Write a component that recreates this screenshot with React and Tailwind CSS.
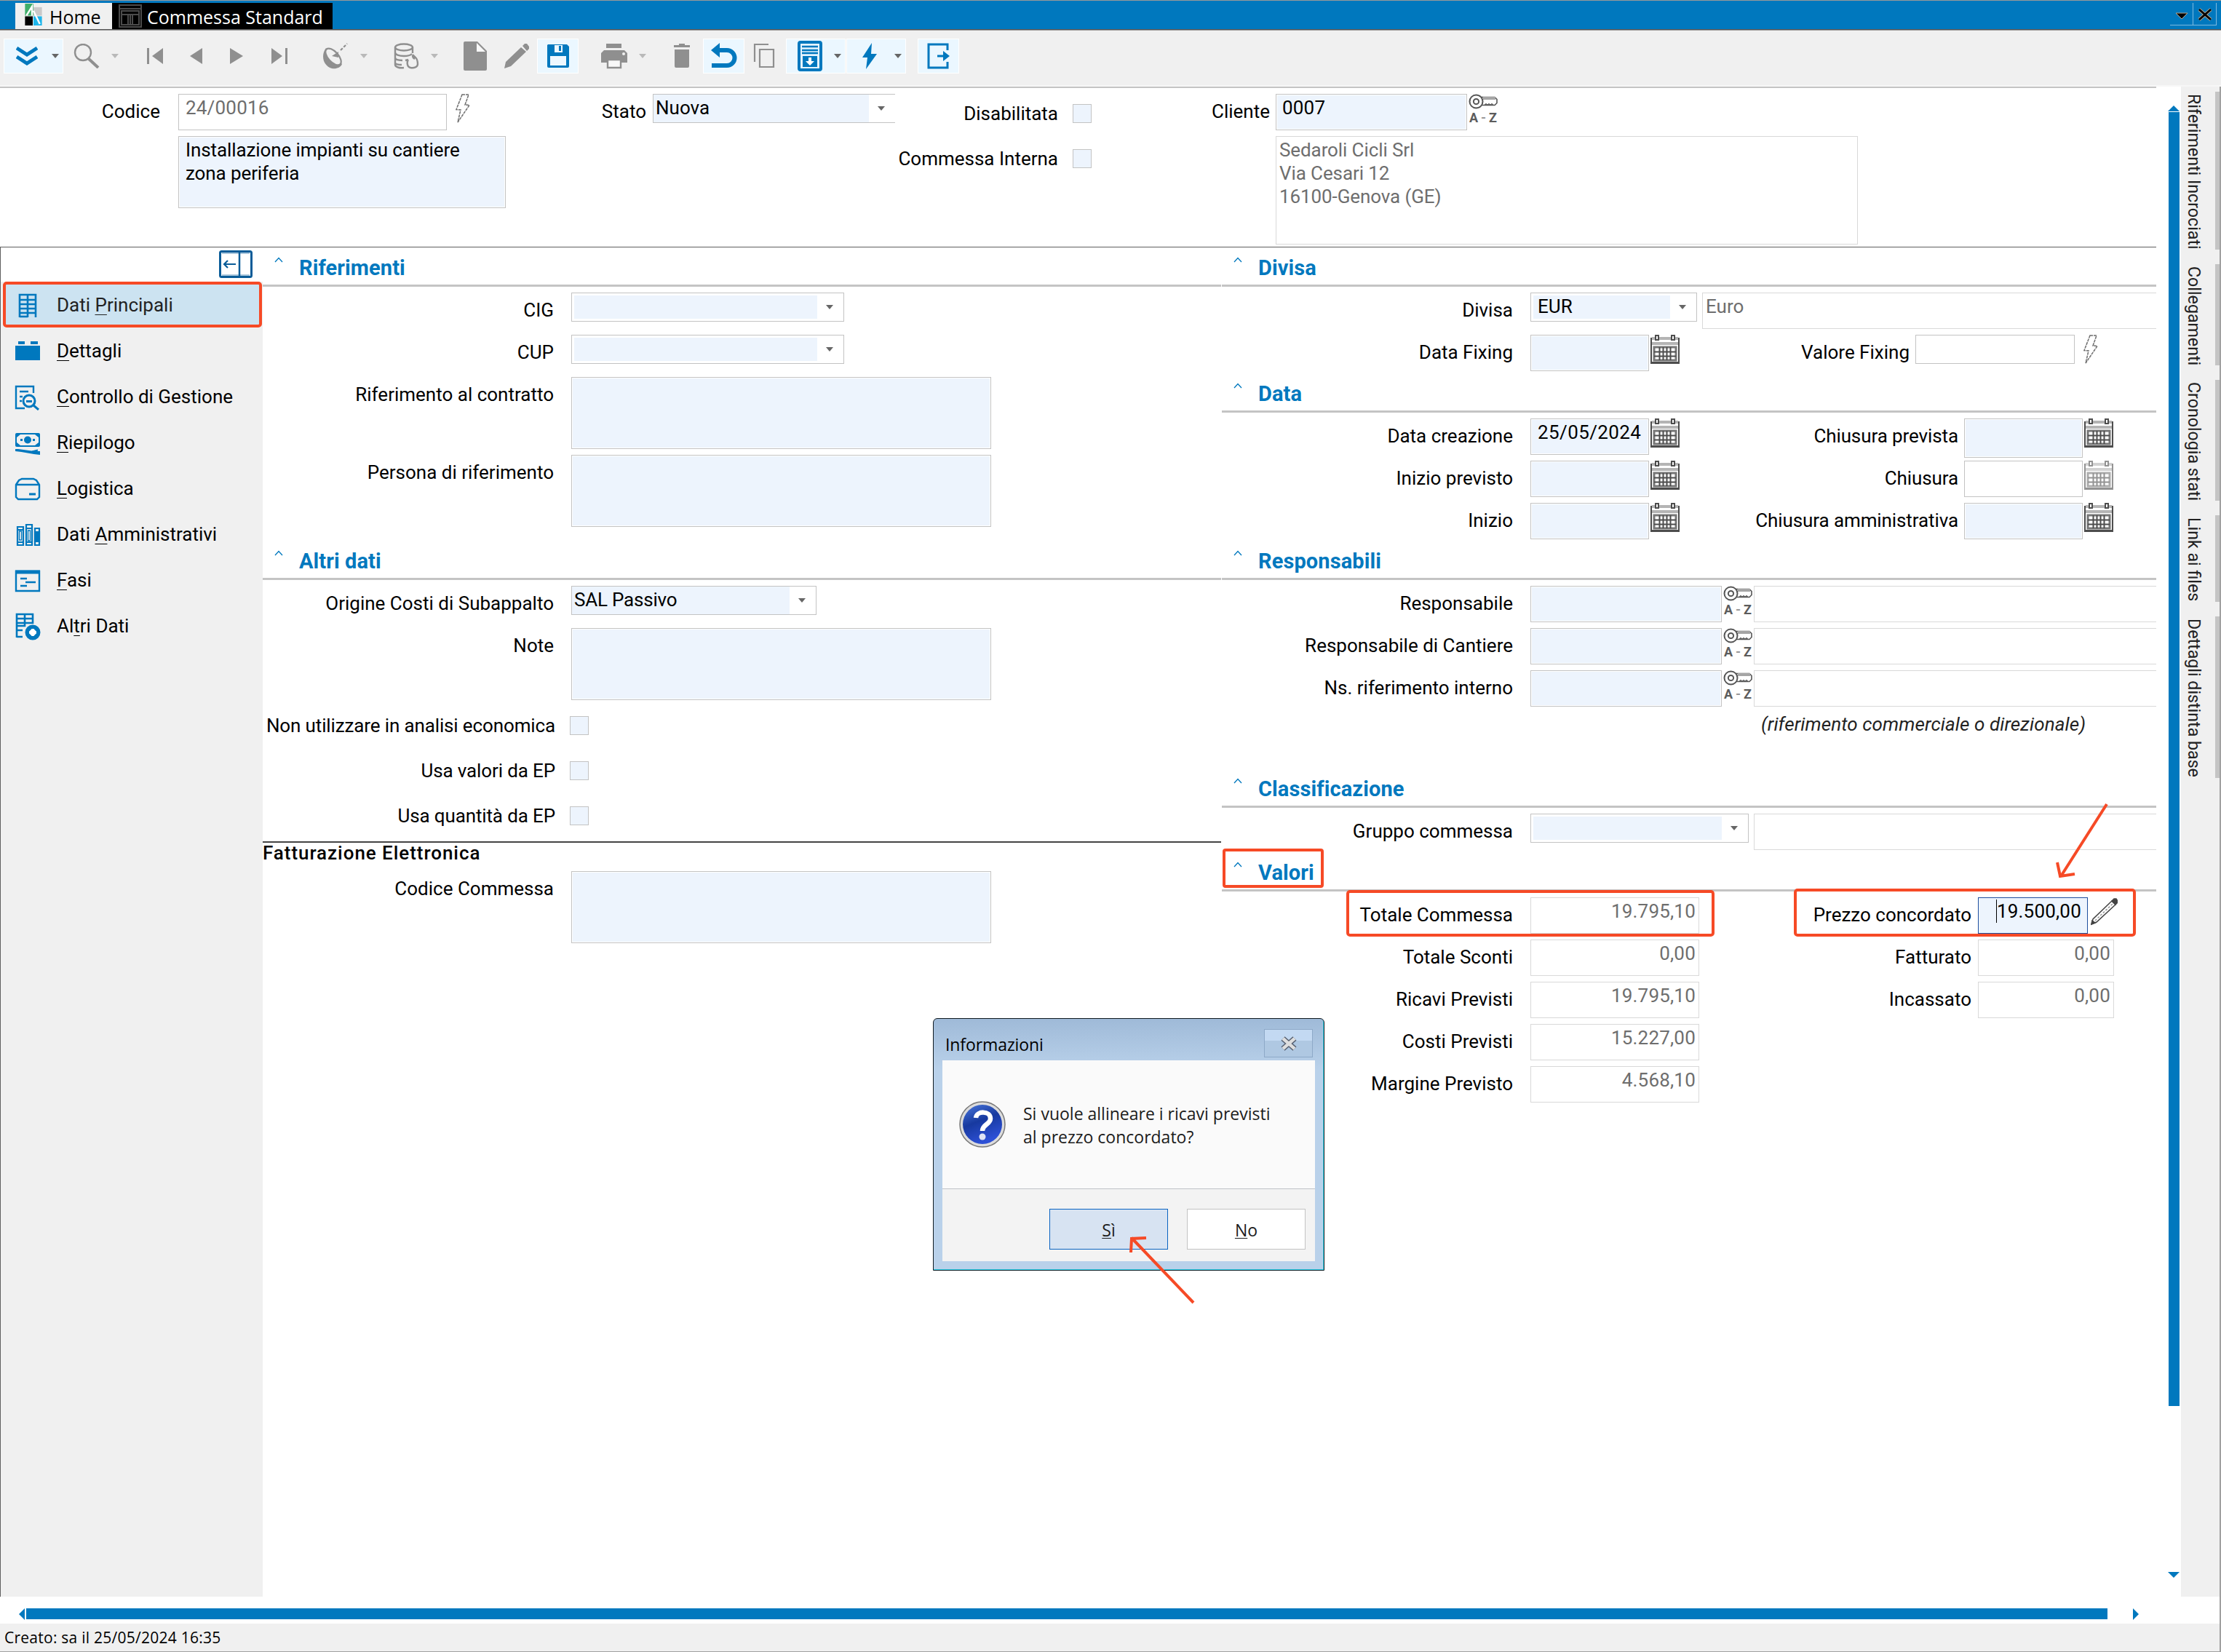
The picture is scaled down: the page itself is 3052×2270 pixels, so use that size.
import React from 'react';
import clsx from 'clsx';

const BLUE = '#0078be';
const GREY = '#8f8f8f';
const RED = '#f64a26';

/* ---------- toolbar icons ---------- */

const Caret = ({ dark = false, className }) => (
  <svg viewBox="0 0 10 6" className={clsx('h-[6px] w-[10px] shrink-0', className)}>
    <path d="M0 0h10L5 6z" fill={dark ? '#666' : '#b9b9b9'} />
  </svg>
);

const DoubleChevronIcon = () => (
  <svg viewBox="0 0 30 28" className="h-[28px] w-[30px]" fill="none" stroke={BLUE} strokeWidth="5">
    <path d="M1 3l14 9 14-9M1 15l14 9 14-9" />
  </svg>
);

const SearchIcon = () => (
  <svg viewBox="0 0 36 34" className="h-[34px] w-[36px]" fill="none" stroke={GREY}>
    <circle cx="13" cy="12" r="11" strokeWidth="2.4" />
    <path d="M20 20l14 13" strokeWidth="4" />
  </svg>
);

const FirstIcon = () => (
  <svg viewBox="0 0 24 24" className="h-[24px] w-[24px]" fill={GREY}>
    <path d="M1 1h3v22H1zM23 1v22L8 12z" />
  </svg>
);

const PrevIcon = () => (
  <svg viewBox="0 0 20 24" className="h-[24px] w-[20px]" fill={GREY}>
    <path d="M18 1v22L1 12z" />
  </svg>
);

const NextIcon = () => (
  <svg viewBox="0 0 20 24" className="h-[24px] w-[20px]" fill={GREY}>
    <path d="M1 1v22l18-11z" />
  </svg>
);

const LastIcon = () => (
  <svg viewBox="0 0 24 24" className="h-[24px] w-[24px]" fill={GREY}>
    <path d="M20 1h3v22h-3zM1 1v22l15-11z" />
  </svg>
);

const SatelliteIcon = () => (
  <svg viewBox="0 0 36 36" className="h-[36px] w-[36px]">
    <path d="M5 7C-2 16 0 31 13 35c6 1 12-1 14-6z" fill={GREY} />
    <ellipse cx="15" cy="19" rx="14" ry="7" transform="rotate(48 15 19)" fill="#f0f0f0" stroke={GREY} strokeWidth="2.2" />
    <path d="M13 18l9-6v8z" fill={GREY} />
    <path d="M25 10l9-9" stroke={GREY} strokeWidth="2.2" strokeDasharray="4 2" />
  </svg>
);

const DatabaseIcon = () => (
  <svg viewBox="0 0 36 36" className="h-[36px] w-[36px]" fill="none" stroke={GREY} strokeWidth="2.4">
    <ellipse cx="15" cy="6" rx="12" ry="4.5" />
    <path d="M3 6v24c0 3 6 5 12 4M27 6v8M3 13c0 3 5 5 12 5M3 20c0 3 5 4 10 4M3 27c0 2 4 3 9 3M15 18c5 0 9-1 11-3" />
    <path d="M21 23c-2 3-2 10 3 11s10-1 10-5-1-7-3-9-4-4-4-4M21 23l-4 1M27 17c0 3 1 4 3 5" />
  </svg>
);

const FileIcon = () => (
  <svg viewBox="0 0 34 42" className="h-[42px] w-[34px]">
    <path d="M3 1h17l13 13v25a2 2 0 01-2 2H3a2 2 0 01-2-2V3a2 2 0 012-2z" fill={GREY} />
    <path d="M19 3v12h12z" fill="#f8f8f8" />
  </svg>
);

const PencilIcon = () => (
  <svg viewBox="0 0 36 36" className="h-[36px] w-[36px]" fill={GREY}>
    <path d="M1 35l2-9L24 6l7 6L10 32zM26 4l3-3h3l3 4v3l-3 3z" />
  </svg>
);

const SaveIcon = () => (
  <svg viewBox="0 0 32 34" className="h-[34px] w-[32px]">
    <path d="M2 1h26l3 3v27a2 2 0 01-2 2H3a2 2 0 01-2-2V2z" fill={BLUE} />
    <path d="M11 2h11v10H11z" fill="#eef8ff" />
    <path d="M17 3h3v7h-3z" fill={BLUE} />
    <path d="M5 17h22v13H5z" fill="#eef8ff" />
  </svg>
);

const PrinterIcon = () => (
  <svg viewBox="0 0 36 36" className="h-[36px] w-[36px]">
    <path d="M7 1h21v6H7zM4 10h28l4 4v13H0V14z" fill={GREY} />
    <circle cx="31" cy="15" r="2" fill="#f0f0f0" />
    <path d="M9 23h18v11H9z" fill="#f8f8f8" stroke={GREY} strokeWidth="2.4" />
  </svg>
);

const TrashIcon = () => (
  <svg viewBox="0 0 24 36" className="h-[36px] w-[24px]" fill={GREY}>
    <path d="M8 1h8v2h7v3H1V3h7zM2 9h20v23a2 2 0 01-2 2H4a2 2 0 01-2-2z" />
  </svg>
);

const UndoIcon = () => (
  <svg viewBox="0 0 36 36" className="h-[36px] w-[36px]">
    <path d="M8 10h14a10.500 10.500 0 010 21H1" fill="none" stroke={BLUE} strokeWidth="6" />
    <path d="M0 10L12 0v20z" fill={BLUE} />
  </svg>
);

const CopyIcon = () => (
  <svg viewBox="0 0 30 36" className="h-[36px] w-[30px]" fill="none" stroke={GREY} strokeWidth="2.2">
    <path d="M21 2H2v24" />
    <path d="M9 9h19v24H9z" />
  </svg>
);

const CabinetIcon = () => (
  <svg viewBox="0 0 34 42" className="h-[42px] w-[34px]">
    <rect x="2" y="2" width="30" height="38" rx="2" fill="#e4f3fd" stroke={BLUE} strokeWidth="4" />
    <path d="M6 8h22M6 13h22M6 17h22" stroke={BLUE} strokeWidth="2.6" />
    <path d="M7 21h20v15H7z" fill={BLUE} />
    <path d="M15 23h4v5h4l-6 6-6-6h4z" fill="#fff" />
  </svg>
);

const BoltIcon = () => (
  <svg viewBox="0 0 20 36" className="h-[36px] w-[20px]">
    <path d="M13 0L0 20h7L5 36l15-21h-8z" fill={BLUE} />
  </svg>
);

const ExitIcon = () => (
  <svg viewBox="0 0 32 36" className="h-[36px] w-[32px]" fill="none" stroke={BLUE} strokeWidth="3">
    <path d="M28 10V2H2v32h26v-8" />
    <path d="M14 18h12" />
    <path d="M22 11l9 7-9 7z" fill={BLUE} stroke="none" />
  </svg>
);

/* ---------- field icons ---------- */

const OutlineBolt = ({ className }) => (
  <svg viewBox="0 0 20 40" className={clsx('h-[40px] w-[20px] shrink-0', className)} fill="none" stroke="#6d6d6d" strokeWidth="1.500">
    <path d="M9 1h9l-5 14 6 .5L3 39l4-17-6-.5z" strokeDasharray="4 1" />
  </svg>
);

const KeyIcon = () => (
  <div className="ml-[2px] h-[41px] w-[40px] shrink-0">
    <svg viewBox="0 0 40 22" className="h-[22px] w-[40px]">
      <path d="M18 4.500h18l3 3v5l-3 3H18z" fill="#fff" stroke="#555" strokeWidth="1.600" />
      <path d="M20 4h17v4H20z" fill="#a5a5a5" />
      <path d="M22 15.500l2-2 2 2 2-2 2 2 2-2 2 2" fill="none" stroke="#555" strokeWidth="1.200" />
      <circle cx="10.500" cy="10.500" r="9" fill="#fff" stroke="#555" strokeWidth="2" />
      <circle cx="10.500" cy="10.500" r="3.600" fill="none" stroke="#555" strokeWidth="2" />
    </svg>
    <div className="flex h-[19px] justify-between whitespace-nowrap px-px text-[18px] font-bold leading-[22px] text-[#5c5c5c]">
      <span>A</span>
      <span className="text-[#999]">-</span>
      <span>Z</span>
    </div>
  </div>
);

const CalendarIcon = ({ faded = false }) => (
  <svg viewBox="0 0 40 40" className={clsx('ml-[2px] h-[40px] w-[40px] shrink-0', faded && 'opacity-60')}>
    <path d="M1 4v35h38V4" fill="none" stroke="#4d4d4d" strokeWidth="2" />
    <path d="M2 3h36v4H2zM2 10h36v4H2z" fill="#b4b4b4" />
    <path d="M7 1h4v6H7zM29 1h4v6h-4z" fill="#fff" stroke="#4d4d4d" strokeWidth="2" />
    <rect x="5" y="17" width="30" height="18" fill="#fff" stroke="#777" strokeWidth="3" />
    <path d="M12.500 17v18M17.500 17v18M22.500 17v18M27.500 17v18M5 23.500h30M5 29.500h30" stroke="#4d4d4d" strokeWidth="2" />
    <path d="M1 38.500h38" stroke="#4d4d4d" strokeWidth="3" />
  </svg>
);

const OutlinePencil = () => (
  <svg viewBox="0 0 38 40" className="ml-[3px] h-[40px] w-[38px] shrink-0" fill="none" stroke="#444" strokeWidth="1.500">
    <path d="M2 37l2-7L30 5l5 5L9 34z" />
    <path d="M7 32L32 8" strokeDasharray="3 2" stroke="#999" />
    <path d="M30 5l3-3h3l2 3v2l-3 3zM2 37l1-5 4 3z" fill="#444" />
  </svg>
);

/* ---------- sidebar icons ---------- */

const sideIcons = {
  building: (
    <svg viewBox="0 0 36 36" className="h-[36px] w-[36px]" fill="none" stroke={BLUE} strokeWidth="2.600">
      <path d="M7 34V3h22v31M18 3v31M7 10h22M7 16h22M7 22h22M7 28h22" />
      <path d="M7 33h11" />
    </svg>
  ),
  brick: (
    <svg viewBox="0 0 36 36" className="h-[36px] w-[36px]" fill={BLUE}>
      <path d="M1 10h34v20H1zM5 4h9v4H5zM22 4h10v4H22z" />
    </svg>
  ),
  report: (
    <svg viewBox="0 0 36 36" className="h-[36px] w-[36px]" fill="none" stroke={BLUE} strokeWidth="2.400">
      <path d="M26 12V3H2v30h12M7 10h12M7 17h4M7 23h3" />
      <circle cx="20" cy="23" r="8" strokeWidth="3" />
      <path d="M26 29l7 6" strokeWidth="3" />
      <path d="M16 22h8v3h-8z" fill={BLUE} stroke="none" />
    </svg>
  ),
  money: (
    <svg viewBox="0 0 36 36" className="h-[36px] w-[36px]">
      <rect x="1" y="4" width="34" height="19" rx="2" fill={BLUE} />
      <path d="M8 6h20l5 4v7l-5 4H8l-5-4v-7z" fill="#f0f0f0" />
      <circle cx="18" cy="13.500" r="5" fill={BLUE} />
      <path d="M8 12h3v3H8zM25 12h3v3h-3zM1 26h4l22 3h8v5C24 33 12 30 1 29z" fill={BLUE} />
      <path d="M24 29.500l8-2" stroke={BLUE} strokeWidth="2" />
    </svg>
  ),
  box: (
    <svg viewBox="0 0 36 36" className="h-[36px] w-[36px]" fill="none" stroke={BLUE} strokeWidth="2.400">
      <path d="M2 12l4-6 4-2h16l4 2 4 6v17l-3 3H5l-3-3zM2 12h32" />
      <path d="M20 25h9" strokeWidth="3" />
    </svg>
  ),
  binders: (
    <svg viewBox="0 0 36 36" className="h-[36px] w-[36px]" fill="none" stroke={BLUE} strokeWidth="2.200">
      <path d="M4 7h8v25H4zM16 4h8v28h-8zM28 9h6v23h-6zM4 11h8M4 28h8M16 9h8M16 28h8" />
      <path d="M6.500 13h3v12h-3zM18.500 12h3v14h-3z" strokeWidth="1.300" />
      <path d="M28 14h6v13h-6z" fill={BLUE} />
    </svg>
  ),
  gantt: (
    <svg viewBox="0 0 36 36" className="h-[36px] w-[36px]" fill="none" stroke={BLUE} strokeWidth="2.400">
      <path d="M2 5h32v27H2zM8 15h9M15 20h14M8 25h9" />
      <path d="M1 6h34" strokeWidth="5" />
    </svg>
  ),
  addTable: (
    <svg viewBox="0 0 36 38" className="h-[38px] w-[36px]" fill="none" stroke={BLUE} strokeWidth="2.600">
      <path d="M3 34V2h22v12H3M3 8h22M14 2v16H3M3 24h8M3 33h8" />
      <circle cx="25" cy="27" r="7.500" strokeWidth="6" fill="#fff" />
      <path d="M25 22v10M20 27h10" stroke="#fff" strokeWidth="3.500" />
    </svg>
  ),
};

const menu = [
  { icon: 'building', text: ['Dati ', 'P', 'rincipali'], active: true },
  { icon: 'brick', text: ['', 'D', 'ettagli'] },
  { icon: 'report', text: ['', 'C', 'ontrollo di Gestione'] },
  { icon: 'money', text: ['', 'R', 'iepilogo'] },
  { icon: 'box', text: ['', 'L', 'ogistica'] },
  { icon: 'binders', text: ['Dati ', 'A', 'mministrativi'] },
  { icon: 'gantt', text: ['', 'F', 'asi'] },
  { icon: 'addTable', text: ['Al', 't', 'ri Dati'] },
];

/* ---------- form primitives ---------- */

const Label = ({ children, className }) => (
  <div className={clsx('shrink-0 whitespace-nowrap pt-[8px] text-right leading-[32px]', className)}>{children}</div>
);

// Editable fields have a pale blue fill set off from the frame by a thin white gap
const Field = ({ children, className, tone = 'edit' }) => (
  <div
    className={clsx(
      'shrink-0 whitespace-pre border pt-[2px] leading-[32px]',
      tone === 'edit' && 'border-[#c3c3c3] bg-[#edf4fd] ring-1 ring-inset ring-white',
      tone === 'plain' && 'border-[#c3c3c3] text-[#6e6e6e]',
      tone === 'readonly' && 'border-[#d9d9d9] text-[#6e6e6e]',
      className
    )}
  >
    {children}
  </div>
);

const Select = ({ value, className, flush = false, open = false }) => (
  <div className={clsx('flex h-[40px] shrink-0 border border-[#c3c3c3] bg-white', open && 'border-r-0', !flush && 'p-[3px] pr-0', className)}>
    <div className={clsx('flex-1 bg-[#edf4fd] leading-[32px]', flush ? 'pl-[3px] pt-[2px]' : 'pl-[6px]')}>
      <span className={clsx('block', !flush && '-mt-px')}>{value}</span>
    </div>
    <div className="flex w-[36px] items-center justify-center pr-[3px]">
      <Caret dark />
    </div>
  </div>
);

const Checkbox = ({ className }) => (
  <div className={clsx('h-[26px] w-[26px] shrink-0 border border-[#c3c3c3] bg-[#edf4fd]', className)} />
);

const Section = ({ title, className }) => (
  <div className={clsx('flex h-[54px] border-b-[3px] border-[#c4c4c4] pl-[16px]', className)}>
    <svg viewBox="0 0 12 8" className="mt-[13px] h-[8px] w-[12px]" fill="none" stroke={BLUE} strokeWidth="1.300">
      <path d="M1 7l5-5.500L11 7" />
    </svg>
    <h2 className="ml-[22px] mt-[11px] text-[29px] font-bold leading-[34px] tracking-[0.1px] text-[#0078be]">{title}</h2>
  </div>
);

const Row = ({ children, className, height = 'h-[58px]' }) => (
  <div className={clsx('flex items-start', height, className)}>{children}</div>
);

/* ---------- page areas ---------- */

const ToolButton = ({ children, active = false, className }) => (
  <div className={clsx('flex h-[48px] shrink-0 items-center', active && 'border border-white bg-[#ebf7ff]', className)}>{children}</div>
);

const TitleBar = () => (
  <div className="flex h-[42px] flex-col border-t border-[#999]">
    <div className="flex h-[39px] bg-[#0078be] pl-[21px] pt-[3px] font-['Open_Sans','Noto_Sans',sans-serif] text-[25px]">
      <div className="flex w-[133px] items-center bg-[#f0f0f0] pl-[13px]">
        <svg viewBox="0 0 24 32" className="mb-[4px] h-[31px] w-[24px]">
          <path d="M0 0h12v17H0z" fill="#3fae6a" />
          <path d="M12 5h12v12H12z" fill="#c9c9c9" />
          <path d="M0 18h11v13H0z" fill="#000" />
          <path d="M12 18h12v13H12z" fill="#1fb5ea" />
          <path d="M2 17L10 4v13M12 10l9 19" fill="none" stroke="#fff" strokeWidth="2.500" />
        </svg>
        <span className="ml-[10px] pt-[3px]">Home</span>
      </div>
      <div className="flex w-[303px] items-center bg-black pl-[9px] text-white">
        <svg viewBox="0 0 32 32" className="h-[32px] w-[32px]" fill="none" stroke="#4b4b4b" strokeWidth="2">
          <path d="M1 1h30v30H1zM1 6h30M4 9h24v19H4zM4 14h24M13 15v13M19 15v13M16 15v13" />
        </svg>
        <span className="ml-[7px] whitespace-nowrap pt-[3px]">Commessa Standard</span>
      </div>
      <div className="ml-auto mr-[6px] flex h-[31px]">
        <div className="flex w-[32px] items-center justify-center border-b border-r border-[#7fb9de]">
          <svg viewBox="0 0 18 10" className="mt-[5px] h-[10px] w-[18px]">
            <path d="M1 1h16L9 9z" fill="#000" stroke="#b9a58c" strokeWidth="1" />
          </svg>
        </div>
        <div className="flex w-[32px] items-center justify-center border-b border-r border-[#7fb9de]">
          <svg viewBox="0 0 20 18" className="mt-[2px] h-[18px] w-[20px]">
            <path d="M2 2l16 14M18 2L2 16" stroke="#b9a58c" strokeWidth="4.500" />
            <path d="M2 2l16 14M18 2L2 16" stroke="#000" strokeWidth="2.800" />
          </svg>
        </div>
      </div>
    </div>
    <div className="h-[2px] border-b border-t border-b-[#999] border-t-[#555]" />
  </div>
);

const Toolbar = () => (
  <div className="flex h-[77px] items-start border-b-2 border-b-[#f7f7f7] bg-[#f0f0f0] pl-[5px] pt-[11px]">
    <ToolButton active className="w-[82px] pl-[16px]">
      <DoubleChevronIcon />
      <Caret dark className="ml-[19px]" />
    </ToolButton>
    <ToolButton className="ml-[14px]"><SearchIcon /><Caret className="ml-[16px]" /></ToolButton>
    <ToolButton className="ml-[38px]"><FirstIcon /></ToolButton>
    <ToolButton className="ml-[35px]"><PrevIcon /></ToolButton>
    <ToolButton className="ml-[35px]"><NextIcon /></ToolButton>
    <ToolButton className="ml-[37px]"><LastIcon /></ToolButton>
    <ToolButton className="ml-[47px]"><SatelliteIcon /><Caret className="ml-[16px]" /></ToolButton>
    <ToolButton className="ml-[35px]"><DatabaseIcon /><Caret className="ml-[16px]" /></ToolButton>
    <ToolButton className="ml-[34px]"><FileIcon /></ToolButton>
    <ToolButton className="ml-[22px]"><PencilIcon /></ToolButton>
    <ToolButton active className="ml-[10px] w-[57px] justify-center"><SaveIcon /></ToolButton>
    <ToolButton className="ml-[31px]"><PrinterIcon /><Caret className="ml-[16px]" /></ToolButton>
    <ToolButton className="ml-[37px]"><TrashIcon /></ToolButton>
    <ToolButton active className="ml-[17px] w-[57px] justify-center"><UndoIcon /></ToolButton>
    <ToolButton className="ml-[12px]"><CopyIcon /></ToolButton>
    <ToolButton active className="ml-[15px] w-[82px] pl-[15px]"><CabinetIcon /><Caret dark className="ml-[16px]" /></ToolButton>
    <ToolButton active className="ml-px w-[82px] pl-[21px]"><BoltIcon /><Caret dark className="ml-[24px]" /></ToolButton>
    <ToolButton active className="ml-[16px] w-[57px] justify-center"><ExitIcon /></ToolButton>
  </div>
);

const Header = () => (
  <div className="flex h-[221px] items-start border-b border-t-2 border-b-[#5f5f5f] border-t-[#c4c4c4] pt-[8px]">
    <Label className="w-[220px]">Codice</Label>
    <div className="ml-[25px] w-[455px]">
      <div className="flex">
        <Field tone="plain" className="h-[50px] w-[369px] px-[9px] tracking-[0.2px]">24/00016</Field>
        <OutlineBolt className="ml-[12px]" />
      </div>
      <Field className="mt-[8px] h-[99px] w-[450px] px-[9px] tracking-[-0.1px]">{'Installazione impianti su cantiere\nzona periferia'}</Field>
    </div>
    <Label className="w-[188px]">Stato</Label>
    <Select flush open value="Nuova" className="ml-[9px] w-[333px]" />
    <div className="w-[224px] pt-[3px]">
      <Label>Disabilitata</Label>
      <Label className="mt-[22px]">Commessa Interna</Label>
    </div>
    <div className="ml-[20px] pt-[14px]">
      <Checkbox />
      <Checkbox className="mt-[36px]" />
    </div>
    <Label className="w-[245px]">Cliente</Label>
    <div className="ml-[8px]">
      <div className="flex">
        <Field className="h-[50px] w-[263px] px-[8px] tracking-[0.2px]">0007</Field>
        <KeyIcon />
      </div>
      <Field tone="readonly" className="mt-[8px] h-[149px] w-[800px] px-[4px] tracking-[-0.1px]">{'Sedaroli Cicli Srl\nVia Cesari 12\n16100-Genova (GE)'}</Field>
    </div>
  </div>
);

const Sidebar = () => (
  <nav className="flex w-[361px] shrink-0 flex-col border-l border-l-[#5f5f5f]">
    <div className="flex h-[47px] justify-end pr-[14px] pt-[4px]">
      <svg viewBox="0 0 46 38" className="h-[38px] w-[46px]" fill="none" stroke="#0a5c98">
        <rect x="1.500" y="1.500" width="43" height="35" rx="2" strokeWidth="3" />
        <path d="M4 4h38M4 34h38" stroke="#a9c6dc" strokeWidth="2" />
        <path d="M28 3v32" strokeWidth="2.500" />
        <path d="M7 19h16M12 14l-5 5 5 5" strokeWidth="2.200" />
      </svg>
    </div>
    <div className="flex-1 bg-[#f0f0f0]">
      {menu.map(({ icon, text: [before, key, after], active }) => (
        <div
          key={icon}
          className={clsx(
            'flex h-[63px] items-center pt-[2px]',
            active ? 'ml-[3px] w-[356px] rounded-[5px] border-4 border-[#f64a26] bg-[#cce3f1] pl-[12px] text-[#222]' : 'pl-[19px]'
          )}
        >
          <span className="flex w-[36px] shrink-0 justify-center">{sideIcons[icon]}</span>
          <span className="ml-[22px] whitespace-pre">
            {before}
            <span className="underline decoration-1 underline-offset-[4px]">{key}</span>
            {after}
          </span>
        </div>
      ))}
    </div>
  </nav>
);

const LeftColumn = () => (
  <div className="w-[1317px] shrink-0">
    <Section title="Riferimenti" />
    <Row className="mt-[8px]"><Label className="w-[400px]">CIG</Label><Select className="ml-[24px] w-[375px]" /></Row>
    <Row><Label className="w-[400px]">CUP</Label><Select className="ml-[24px] w-[375px]" /></Row>
    <Row height="h-[107px]"><Label className="w-[400px]">Riferimento al contratto</Label><Field className="ml-[24px] h-[99px] w-[577px]" /></Row>
    <Row height="h-[118px]"><Label className="w-[400px]">Persona di riferimento</Label><Field className="ml-[24px] h-[99px] w-[577px]" /></Row>
    <Section title="Altri dati" />
    <Row className="mt-[8px]">
      <Label className="w-[400px]">Origine Costi di Subappalto</Label>
      <Select flush value="SAL Passivo" className="ml-[24px] w-[337px] tracking-[-0.2px]" />
    </Row>
    <Row height="h-[121px]"><Label className="w-[400px]">Note</Label><Field className="ml-[24px] h-[99px] w-[577px]" /></Row>
    {['Non utilizzare in analisi economica', 'Usa valori da EP', 'Usa quantità da EP'].map((text) => (
      <div key={text} className="flex h-[62px] items-start">
        <div className="-mt-[4px] w-[402px] whitespace-nowrap text-right leading-[34px] tracking-[-0.13px]">{text}</div>
        <Checkbox className="ml-[20px]" />
      </div>
    ))}
    <div className="-mt-[14px] h-[41px] border-t-2 border-[#444] font-medium leading-[29px] tracking-[0.95px]">Fatturazione Elettronica</div>
    <Row><Label className="w-[400px]">Codice Commessa</Label><Field className="ml-[24px] h-[99px] w-[577px]" /></Row>
  </div>
);

const totals = [
  ['Totale Commessa', '19.795,10'],
  ['Totale Sconti', '0,00', 'Fatturato', '0,00'],
  ['Ricavi Previsti', '19.795,10', 'Incassato', '0,00'],
  ['Costi Previsti', '15.227,00'],
  ['Margine Previsto', '4.568,10'],
];

const RightColumn = () => (
  <div className="ml-px w-[1284px] shrink-0">
    <Section title="Divisa" />
    <Row className="mt-[8px]">
      <Label className="w-[400px]">Divisa</Label>
      <Select value="EUR" className="ml-[24px] w-[229px]" />
      <Field tone="readonly" className="ml-[7px] h-[50px] w-[624px] border-r-0 px-[4px]">Euro</Field>
    </Row>
    <Row height="h-[55px]">
      <Label className="w-[400px]">Data Fixing</Label>
      <Field className="ml-[24px] h-[50px] w-[163px]" />
      <CalendarIcon />
      <Label className="w-[316px]">Valore Fixing</Label>
      <Field tone="plain" className="ml-[8px] h-[40px] w-[219px]" />
      <OutlineBolt className="ml-[12px]" />
    </Row>
    <Section title="Data" className="-mt-[2px]" />
    {[
      ['Data creazione', '25/05/2024', 'Chiusura prevista', false, 'h-[54px]'],
      ['Inizio previsto', '', 'Chiusura', true, 'h-[50px]'],
      ['Inizio', '', 'Chiusura amministrativa', false, 'h-[50px]'],
    ].map(([left, date, right, locked, rightHeight], i) => (
      <Row key={left} className={i === 0 ? 'mt-[8px]' : ''}>
        <Label className="w-[400px]">{left}</Label>
        <Field className="ml-[24px] h-[50px] w-[163px] px-[9px] tracking-[0.4px]">{date}</Field>
        <CalendarIcon />
        <Label className="w-[383px] tracking-[-0.1px]">{right}</Label>
        <Field tone={locked ? 'plain' : 'edit'} className={clsx('ml-[8px] w-[163px]', rightHeight)} />
        <CalendarIcon faded={locked} />
      </Row>
    ))}
    <Section title="Responsabili" className="-mt-[6px]" />
    {['Responsabile', 'Responsabile di Cantiere', 'Ns. riferimento interno'].map((text, i) => (
      <Row key={text} className={i === 0 ? 'mt-[8px]' : ''}>
        <Label className="w-[400px]">{text}</Label>
        <Field className="ml-[24px] h-[50px] w-[263px]" />
        <KeyIcon />
        <Field tone="readonly" className="ml-[2px] h-[50px] w-[553px] border-r-0" />
      </Row>
    ))}
    <p className="h-[77px] pl-[741px] italic leading-[32px] tracking-[0.1px] text-[#222]">(riferimento commerciale o direzionale)</p>
    <Section title="Classificazione" />
    <Row className="mt-[8px]">
      <Label className="w-[400px]">Gruppo commessa</Label>
      <Select className="ml-[24px] w-[300px]" />
      <Field tone="readonly" className="ml-[7px] h-[50px] w-[553px] border-r-0" />
    </Row>
    <div className="relative -mt-[5px]">
      <Section title="Valori" />
      <div className="absolute -top-[5px] left-[1px] h-[54px] w-[139px] rounded-[4px] border-4 border-[#f64a26]" />
    </div>
    <div className="relative pt-[8px]">
      {totals.map(([left, amount, right, rightAmount]) => (
        <Row key={left}>
          <Label className="w-[400px]">{left}</Label>
          <Field tone="readonly" className="ml-[24px] h-[50px] w-[232px] px-[4px] text-right tracking-[0.2px]">{amount}</Field>
          {right && <Label className="w-[374px]">{right}</Label>}
          {right && <Field tone="readonly" className="ml-[9px] h-[50px] w-[187px] px-[4px] text-right tracking-[0.2px]">{rightAmount}</Field>}
          {left === 'Totale Commessa' && (
            <>
              <Label className="w-[374px]">Prezzo concordato</Label>
              <div className="ml-[9px] flex h-[50px] w-[151px] items-start justify-end border border-[#1f4f9e] bg-[#edf4fd] pr-[8px] pt-[2px]">
                <span className="h-[32px] w-px bg-black" />
                <span className="leading-[32px] tracking-[0.2px]">19.500,00</span>
              </div>
              <OutlinePencil />
            </>
          )}
        </Row>
      ))}
      {/* highlight frames */}
      <div className="absolute -top-[2px] left-[171px] h-[64px] w-[506px] rounded-[5px] border-4 border-[#f64a26]" />
      <div className="absolute -top-[4px] left-[786px] h-[66px] w-[470px] rounded-[5px] border-4 border-[#f64a26]" />
    </div>
  </div>
);

const sideTabs = [
  ['Riferimenti Incrociati', 'h-[217px]'],
  ['Collegamenti', 'h-[139px]'],
  ['Cronologia stati', 'h-[166px]'],
  ['Link ai files', 'h-[119px]'],
  ['Dettagli distinta base', 'h-[222px]'],
];

const RightRail = () => (
  <>
    <div className="flex w-[34px] shrink-0 flex-col items-center pl-[14px] pt-[26px]">
      <svg viewBox="0 0 16 8" className="h-[8px] w-[16px] shrink-0"><path d="M0 8h16L8 0z" fill={BLUE} /></svg>
      <div className="mt-px h-[1778px] w-[15px] shrink-0 bg-[#0078be]" />
      <svg viewBox="0 0 16 8" className="mb-[26px] mt-auto h-[8px] w-[16px] shrink-0"><path d="M0 0h16L8 8z" fill={BLUE} /></svg>
    </div>
    <div className="flex flex-1 flex-col gap-[20px] border-r-2 border-[#a0a0a0] bg-[#f0f0f0] pt-[7px]">
      {sideTabs.map(([text, height]) => (
        <div key={text} className={clsx('flex shrink-0 justify-end border-r-[6px] border-[#c4c4c4] pr-[14px] pt-[3px]', height)}>
          <span className="whitespace-nowrap text-[23.200px] leading-[30px] text-[#222] [writing-mode:vertical-rl]">{text}</span>
        </div>
      ))}
    </div>
  </>
);

const Dialog = () => (
  <div className="absolute left-[1282px] top-[1399px] flex h-[347px] w-[538px] flex-col rounded-t-[6px] border border-[#101a20] bg-linear-to-b from-[#9fbad8] from-0% via-[#b9d1ea] via-20% to-[#b9d1ea] px-[12px] pb-[12px] pt-px font-['Open_Sans','Noto_Sans',sans-serif] text-[23px] shadow-[inset_-1px_-1px_0_#2fd0e8]">
    <div className="flex h-[56px] shrink-0 items-start justify-between pl-[4px]">
      <span className="mt-[18px] leading-[32px] tracking-[-0.1px]">Informazioni</span>
      <div className="mr-[3px] mt-[13px] flex h-[39px] w-[67px] items-center justify-center border border-[#8ea9c8] bg-linear-to-b from-[#c3d9f2] from-40% to-[#afc8e2] to-40%">
        <svg viewBox="0 0 24 20" className="h-[20px] w-[24px]">
          <path d="M4 3l16 14M20 3L4 17" stroke="#555f70" strokeWidth="7.500" />
          <path d="M4 3l16 14M20 3L4 17" stroke="#dedede" strokeWidth="4.500" />
        </svg>
      </div>
    </div>
    <div className="flex h-[176px] shrink-0 bg-[#fafafa] pl-[23px]">
      <svg viewBox="0 0 64 64" className="mt-[56px] h-[64px] w-[64px]">
        <defs>
          <linearGradient id="q" x1="0" y1="0" x2="0.4" y2="1">
            <stop offset="0" stopColor="#4a78dc" />
            <stop offset="0.5" stopColor="#17399f" />
            <stop offset="1" stopColor="#2d50d6" />
          </linearGradient>
        </defs>
        <circle cx="32" cy="32" r="31" fill="#dcdcdc" stroke="#777" strokeWidth="1.500" />
        <circle cx="32" cy="32" r="27" fill="url(#q)" />
        <path d="M23 23c1-10 20-10 20 1 0 8-11 8-11 17" fill="none" stroke="#fff" strokeWidth="6.500" />
        <circle cx="32" cy="49" r="4.500" fill="#dfe3f5" />
      </svg>
      <p className="ml-[24px] mt-[57px] whitespace-pre leading-[32px] text-[#1c1c1c]">{'Si vuole allineare i ricavi previsti\nal prezzo concordato?'}</p>
    </div>
    <div className="flex flex-1 justify-end gap-[26px] border-t border-[#bfc3c8] bg-[#f3f3f3] pr-[13px] pt-[27px] text-[#1c1c1c]">
      <button className="h-[56px] w-[163px] border border-[#0a63c2] bg-[#d7e3f2] pt-[3px]"><u className="decoration-1 underline-offset-2">S</u>ì</button>
      <button className="h-[56px] w-[163px] border border-[#c3c3c3] bg-white pt-[3px]"><u className="decoration-1 underline-offset-2">N</u>o</button>
    </div>
  </div>
);

export default function App() {
  return (
    <div className="relative flex h-[2270px] w-[3052px] flex-col overflow-hidden bg-white font-['Roboto','Liberation_Sans',sans-serif] text-[26px] text-black">
      <TitleBar />
      <Toolbar />
      <div className="flex h-[2075px] shrink-0">
        <div className="flex w-[2963px] shrink-0 flex-col">
          <Header />
          <div className="flex flex-1">
            <Sidebar />
            <LeftColumn />
            <RightColumn />
          </div>
        </div>
        <RightRail />
      </div>
      <div className="flex flex-1 flex-col border-r-2 border-[#a0a0a0]">
        <div className="flex h-[37px] shrink-0 items-center pl-[26px] pt-[10px]">
          <svg viewBox="0 0 8 16" className="h-[16px] w-[8px]"><path d="M8 0v16L0 8z" fill={BLUE} /></svg>
          <div className="ml-[2px] h-[15px] w-[2860px] bg-[#0078be]" />
          <svg viewBox="0 0 8 16" className="ml-[35px] h-[16px] w-[8px]"><path d="M0 0v16l8-8z" fill={BLUE} /></svg>
        </div>
        <div className="flex-1 border-b border-[#a0a0a0] bg-[#f0f0f0] pl-[6px] pt-[2px] font-['Open_Sans','Noto_Sans',sans-serif] text-[21px] leading-[34px] tracking-[0.25px]">
          Creato: sa il 25/05/2024 16:35
        </div>
      </div>

      <Dialog />

      {/* pointer arrows */}
      <svg viewBox="0 0 100 110" className="absolute left-[1546px] top-[1691px] h-[110px] w-[100px]" fill="none" stroke={RED} strokeWidth="4">
        <path d="M94 99L9 10M29 10L9 11l-1 19" />
      </svg>
      <svg viewBox="0 0 80 110" className="absolute left-[2821px] top-[1099px] h-[110px] w-[80px]" fill="none" stroke={RED} strokeWidth="4">
        <path d="M74 6L11 105M6 86l4 19 20-3" />
      </svg>
    </div>
  );
}
